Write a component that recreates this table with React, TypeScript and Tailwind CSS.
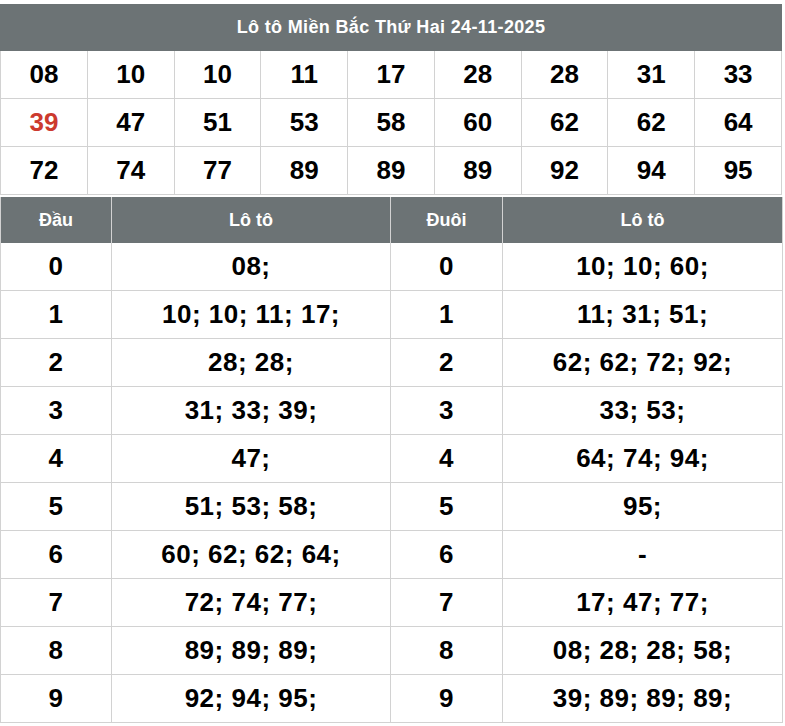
import React from "react";

const top = [
  ["08", "10", "10", "11", "17", "28", "28", "31", "33"],
  ["39", "47", "51", "53", "58", "60", "62", "62", "64"],
  ["72", "74", "77", "89", "89", "89", "92", "94", "95"],
];

const dau = [
  "08;",
  "10; 10; 11; 17;",
  "28; 28;",
  "31; 33; 39;",
  "47;",
  "51; 53; 58;",
  "60; 62; 62; 64;",
  "72; 74; 77;",
  "89; 89; 89;",
  "92; 94; 95;",
];

const duoi = [
  "10; 10; 60;",
  "11; 31; 51;",
  "62; 62; 72; 92;",
  "33; 53;",
  "64; 74; 94;",
  "95;",
  "-",
  "17; 47; 77;",
  "08; 28; 28; 58;",
  "39; 89; 89; 89;",
];

const cell =
  "h-[48px] border-r border-b border-[#d2d2d2] flex items-center justify-center font-bold text-[26px] tracking-[0.5px] text-black";

export default function App() {
  return (
    <div
      className="w-[785px] h-[726px] bg-white overflow-hidden"
      style={{ fontFamily: '"Liberation Sans", Arial, sans-serif' }}
    >
      <div className="w-[782px] pt-[4px]">
        <div className="h-[47px] bg-[#6c7375] flex items-center justify-center text-white font-bold text-[18px] tracking-[0.35px]">
          Lô tô Miền Bắc Thứ Hai 24-11-2025
        </div>
        <div className="grid grid-cols-9 border-l border-[#d2d2d2]">
          {top.map((row, ri) =>
            row.map((n, ci) => (
              <div
                key={ri + "-" + ci}
                className={
                  "h-[48px] border-r border-b border-[#d2d2d2] flex items-center justify-center font-bold text-[26px] " +
                  (ri === 1 && ci === 0 ? "text-[#cc3a2e]" : "text-black")
                }
              >
                {n}
              </div>
            ))
          )}
        </div>
        <div className="h-[2px]" />
        <div className="grid grid-cols-[111px_279px_112px_280px] border-l border-[#d2d2d2]">
          {["Đầu", "Lô tô", "Đuôi", "Lô tô"].map((h, i) => (
            <div
              key={"h" + i}
              className="h-[46px] bg-[#6c7375] border-r border-[#d2d2d2] flex items-center justify-center text-white font-bold text-[18px]"
            >
              {h}
            </div>
          ))}
          {dau.map((d, i) => (
            <React.Fragment key={"r" + i}>
              <div className={cell}>{i}</div>
              <div className={cell}>{d}</div>
              <div className={cell}>{i}</div>
              <div className={cell}>{duoi[i]}</div>
            </React.Fragment>
          ))}
        </div>
      </div>
    </div>
  );
}
